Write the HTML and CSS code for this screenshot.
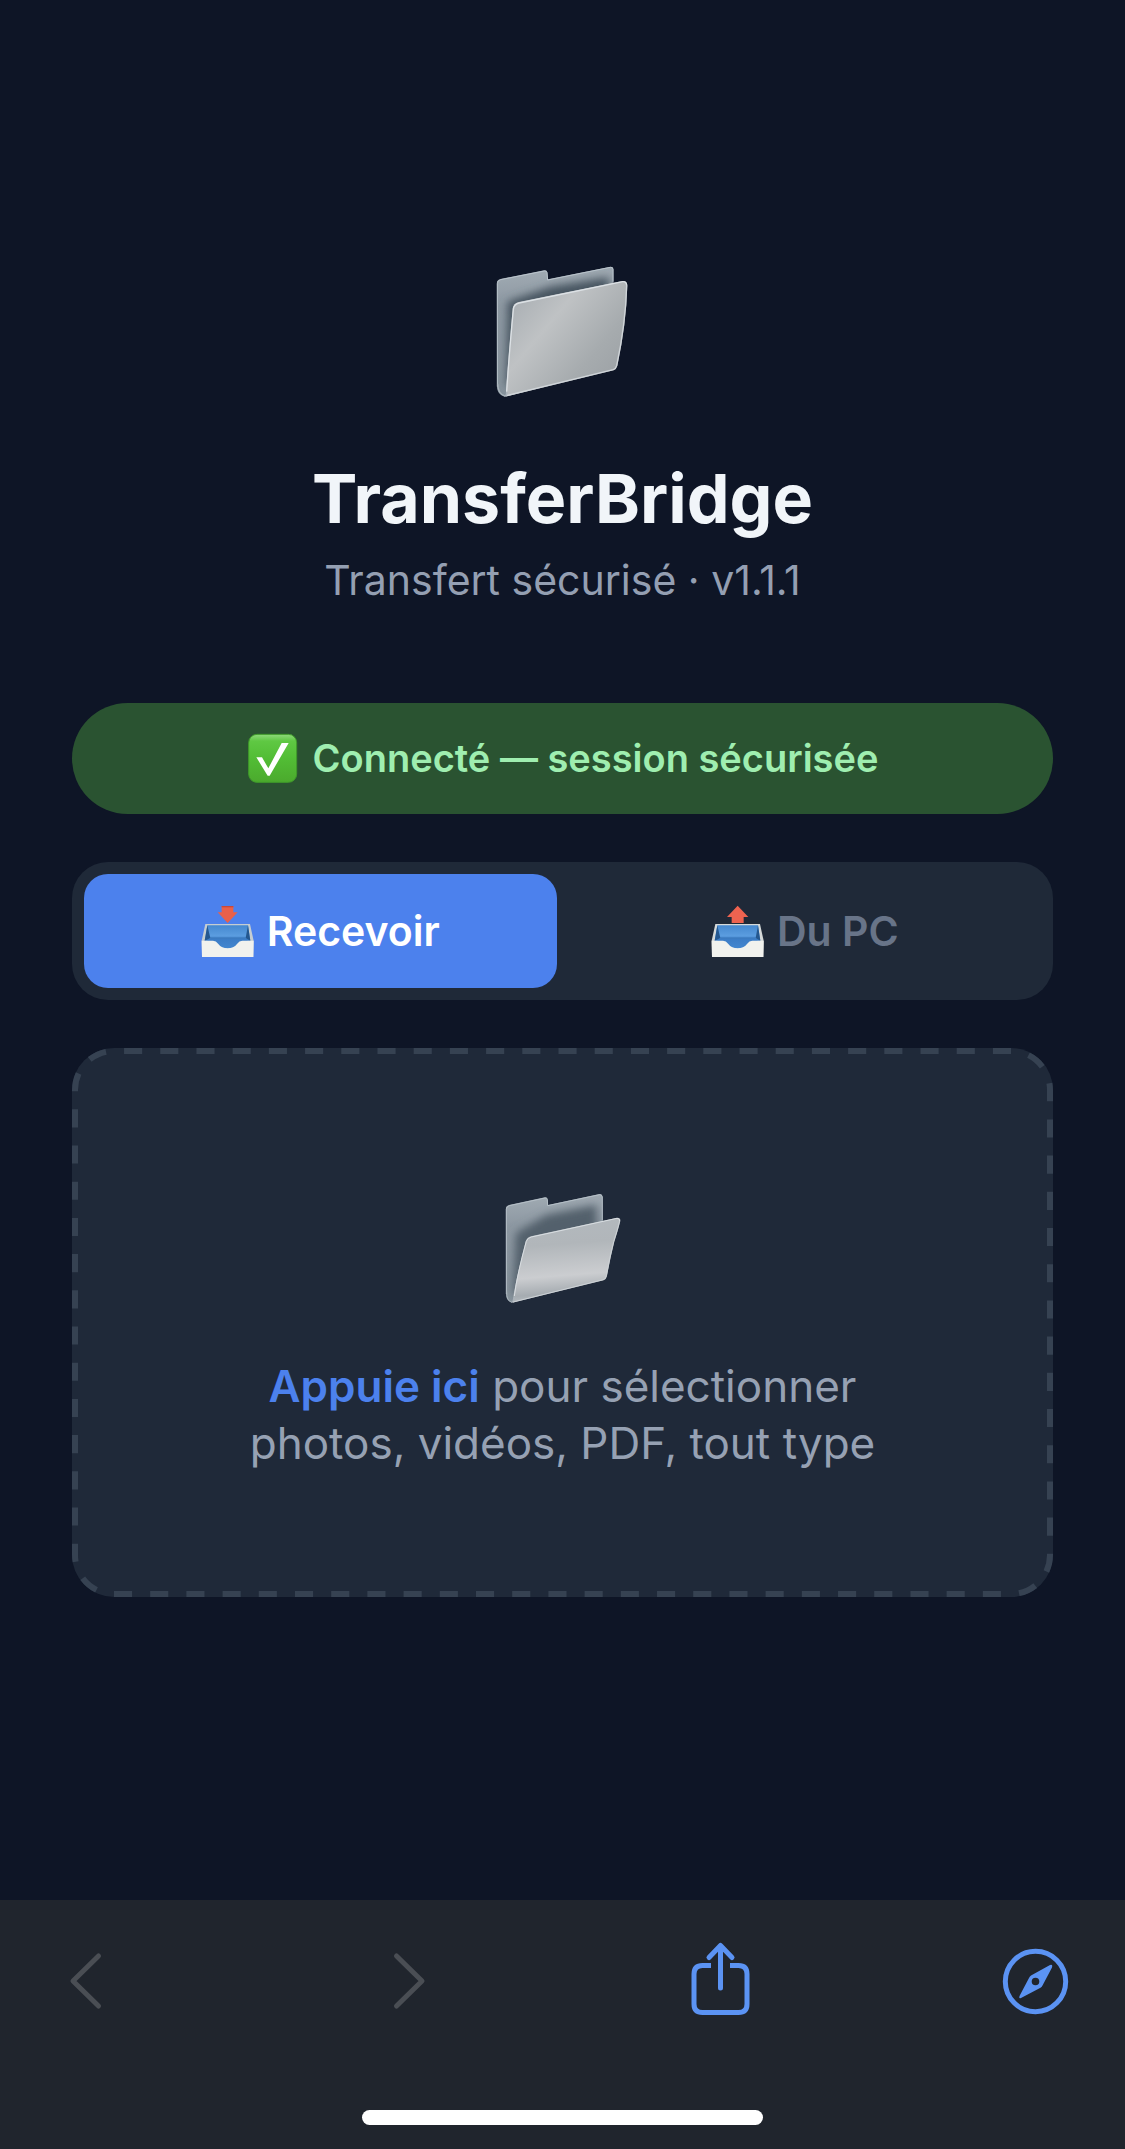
FILE: index.html
```html
<!DOCTYPE html>
<html lang="fr">

<head>
  <meta charset="UTF-8">
  <meta name="viewport" content="width=device-width, initial-scale=1.0">
  <title>TransferBridge</title>
  <link rel="stylesheet" href="styles.css">
</head>

<body>
  <main class="container">
    <header class="header">
      <svg class="logo" viewBox="77 75 402 402" aria-hidden="true">
        <defs>
          <linearGradient id="back" x1="0" y1="0" x2="0.05" y2="1">
            <stop offset="0" stop-color="#a4aeb6" />
            <stop offset="0.3" stop-color="#8d98a2" />
            <stop offset="1" stop-color="#87939c" />
          </linearGradient>
          <linearGradient id="front" x1="0" y1="0.1" x2="1" y2="0.9">
            <stop offset="0" stop-color="#a5abb0" />
            <stop offset="0.35" stop-color="#bfc2c4" />
            <stop offset="0.7" stop-color="#a6abae" />
            <stop offset="1" stop-color="#9a9fa3" />
          </linearGradient>
          <linearGradient id="frontLow" x1="0" y1="0" x2="0.1" y2="1">
            <stop offset="0" stop-color="#b3b9be" />
            <stop offset="0.35" stop-color="#b1b6ba" />
            <stop offset="0.72" stop-color="#cbcdd0" />
            <stop offset="0.92" stop-color="#a6acb1" />
            <stop offset="1" stop-color="#b4babf" />
          </linearGradient>
          <filter id="soft" x="-20%" y="-20%" width="140%" height="140%">
            <feGaussianBlur stdDeviation="13" />
          </filter>
          <clipPath id="logoBack">
            <path d="M79 131Q79 120 90 117L222 91Q230 90 231 97L233 118L420 80Q429 79 430 87L430 385L104 470Q80 464 80 440Z" />
          </clipPath>
          <clipPath id="folderBack">
            <path d="M78 118Q78 108 88 105L196 82Q203 81 204 88L205 105L360 72Q368 71 369 80L369 310L97 398Q79 393 79 372Z" />
          </clipPath>
        </defs>
        <g clip-path="url(#logoBack)">
          <rect x="75" y="75" width="402" height="402" fill="url(#back)" />
          <path d="M112 185L240 140L415 112V400L108 440Z" fill="#465560" filter="url(#soft)" />
        </g>
        <path d="M81 440V131Q81 121 91 119L222 93Q229 92 230 98L232 120L420 82Q427 81 428 88V125" fill="none" stroke="#b9c3cb" stroke-width="3" />
        <path d="M127 206Q129 190 145 186L456 123Q471 121 471 137Q468 250 441 378Q438 388 430 391L106 470Q112 380 127 206Z" fill="url(#front)" />
        <path d="M109 455Q114 370 129 208Q131 192 146 189L457 125Q469 124 469 137" fill="none" stroke="#dce1e5" stroke-width="4" />
        <path d="M469 137Q466 250 439 377Q436 387 429 389L108 467" fill="none" stroke="#d0d5d9" stroke-width="4" />
        <path d="M82 432Q83 462 103 468Q110 467 110 455" fill="none" stroke="#a9b3bb" stroke-width="4" />
      </svg>
      <h1 class="title">TransferBridge</h1>
      <p class="subtitle">Transfert sécurisé · v1.1.1</p>
    </header>

    <div class="status" role="status">
      <svg class="check" viewBox="549 129 153 153" aria-hidden="true">
        <defs>
          <linearGradient id="green" x1="0" y1="0" x2="0" y2="1">
            <stop offset="0" stop-color="#8fd97c" />
            <stop offset="0.14" stop-color="#5fc843" />
            <stop offset="0.5" stop-color="#52bd35" />
            <stop offset="1" stop-color="#4baa2d" />
          </linearGradient>
        </defs>
        <rect x="554" y="133" width="144" height="144" rx="25" fill="url(#green)" stroke="#3f9a2a" stroke-width="3" />
        <path d="M577 202H594L613 235L653 159H674L617 257H611Z" fill="#fff" />
      </svg>
      <span>Connecté — session sécurisée</span>
    </div>

    <div class="tabs">
      <button class="tab active" type="button">
        <svg class="tray" viewBox="420 645 162 159" aria-hidden="true">
          <defs>
            <linearGradient id="trayBlue" x1="0" y1="0" x2="0" y2="1">
              <stop offset="0" stop-color="#4588cf" />
              <stop offset="0.45" stop-color="#5b9de0" />
              <stop offset="0.6" stop-color="#3c7dc6" />
              <stop offset="1" stop-color="#4387d0" />
            </linearGradient>
          </defs>
          <path d="M482 648H517V667H530L500 699L470 667H482Z" fill="#e9604a" />
          <path d="M482 648H517V652H482Z" fill="#c9483a" />
          <path d="M433 702H567L578 752L577 801H423L422 752Z" fill="#c5cdd1" />
          <path d="M439 706H561L568 752Q540 752 530 766Q516 776 500 776Q482 776 470 766Q458 752 431 752Z" fill="url(#trayBlue)" />
          <path d="M439 706L448 744L431 752ZM561 706L554 744L568 752Z" fill="#24578f" />
          <path d="M448 744H554" stroke="#2f6aad" stroke-width="2" />
          <path d="M422 752H456Q465 752 472 762Q482 775 500 775Q518 775 528 762Q535 752 544 752H578L577 801H423Z" fill="#f1f2ee" />
        </svg>
        <span>Recevoir</span>
      </button>
      <button class="tab" type="button">
        <svg class="tray" viewBox="420 645 162 159" aria-hidden="true">
          <path d="M500 647L532 681H518V699H482V681H468Z" fill="#ee6350" />
          <path d="M433 702H567L578 752L577 801H423L422 752Z" fill="#d5d9d9" />
          <path d="M439 706H561L568 752Q540 752 530 766Q516 776 500 776Q482 776 470 766Q458 752 431 752Z" fill="url(#trayBlue)" />
          <path d="M439 706L448 744L431 752ZM561 706L554 744L568 752Z" fill="#24578f" />
          <path d="M448 744H554" stroke="#2f6aad" stroke-width="2" />
          <path d="M422 752H456Q465 752 472 762Q482 775 500 775Q518 775 528 762Q535 752 544 752H578L577 801H423Z" fill="#f1f2ee" />
        </svg>
        <span>Du PC</span>
      </button>
    </div>

    <label class="dropzone" for="files">
      <svg class="outline" aria-hidden="true">
        <rect class="dashes" x="3" y="3" rx="39" pathLength="2952" />
      </svg>
      <svg class="folder" viewBox="73 66 354 336" aria-hidden="true">
        <g clip-path="url(#folderBack)">
          <rect x="73" y="66" width="354" height="336" fill="url(#back)" />
          <path d="M108 190L200 135L350 105V320L100 375Z" fill="#52616c" filter="url(#soft)" />
        </g>
        <path d="M80 372V118Q80 110 89 107L196 84Q202 83 203 89L204 107L360 74Q367 74 368 81V152" fill="none" stroke="#b5bfc7" stroke-width="3" />
        <path d="M138 214Q142 202 154 199L412 143Q423 142 422 153Q416 178 404 215Q392 262 382 318Q380 328 372 331L98 398Q108 330 138 214Z" fill="url(#frontLow)" />
        <path d="M104 378Q112 315 140 214Q143 204 155 201L412 145Q421 145 420 153" fill="none" stroke="#d9dee2" stroke-width="3" />
        <path d="M420 153Q414 178 402 215Q390 262 380 317Q378 327 371 329L100 396" fill="none" stroke="#cdd2d6" stroke-width="3" />
        <path d="M81 365Q80 393 97 397Q103 393 104 380" fill="none" stroke="#a9b3bb" stroke-width="3" />
      </svg>
      <span class="hint"><strong>Appuie ici</strong> pour sélectionner<br>photos, vidéos, PDF, tout type</span>
      <input class="file-input" type="file" id="files" multiple>
    </label>
  </main>

  <footer class="browser-bar">
    <nav class="browser-actions">
      <button class="nav-btn" type="button" aria-label="Page précédente" disabled>
        <svg viewBox="0 0 80 80">
          <path d="M50.500 15L25 40L50.500 65" />
        </svg>
      </button>
      <button class="nav-btn" type="button" aria-label="Page suivante" disabled>
        <svg viewBox="0 0 80 80">
          <path d="M32.500 15L58 40L32.500 65" />
        </svg>
      </button>
      <button class="nav-btn" type="button" aria-label="Partager">
        <svg viewBox="0 0 80 80">
          <path d="M39.500 47V5M28 16.500L39.500 4.500L51 16.500" />
          <path d="M30 24.500H21.500Q13 24.500 13 33V63Q13 71.500 21.500 71.500H57.500Q66 71.500 66 63V33Q66 24.500 57.500 24.500H49" stroke-linecap="butt" />
        </svg>
      </button>
      <button class="nav-btn" type="button" aria-label="Ouvrir dans Safari">
        <svg viewBox="0 0 80 80">
          <circle cx="38.500" cy="40.500" r="30.200" />
          <path class="needle" fill-rule="evenodd" d="M53 24Q56 23 55 26.500L45.500 44.500Q45 46 43.500 46.800L24 57Q21.500 58 22.500 55L32 37Q32.500 35.500 34 34.500ZM38.500 36.700A3.800 3.800 0 1 0 38.500 44.300A3.800 3.800 0 1 0 38.500 36.700Z" />
        </svg>
      </button>
    </nav>
    <div class="home-indicator"></div>
  </footer>
</body>

</html>
```
FILE: styles.css
```css
* {
  box-sizing: border-box;
}

body {
  font-family: Inter, "Liberation Sans", sans-serif;
  margin: 0;
  min-height: 100vh;
  display: flex;
  flex-direction: column;
  background-color: #0e1526;
  color: #f1f5f9;
}

.container {
  flex: 1;
  padding: 265px 72px 72px;
  display: flex;
  flex-direction: column;
  gap: 48px;
}

.header {
  display: flex;
  flex-direction: column;
  align-items: center;
  text-align: center;
  margin-bottom: 50px;
}

.logo {
  width: 134px;
  height: 134px;
}

.title {
  margin: 57px 0 15px;
  font-size: 68px;
  line-height: 84px;
  font-weight: 700;
}

.subtitle {
  margin: 0;
  font-size: 41px;
  line-height: 50px;
  color: #949fb2;
}

.status {
  display: flex;
  justify-content: center;
  align-items: center;
  gap: 15px;
  padding: 30px;
  border-radius: 60px;
  background-color: #2a5331;
  color: #9feeb0;
  font-size: 38px;
  line-height: 51px;
  font-weight: 600;
}

.check {
  width: 51px;
  height: 51px;
}

.tabs {
  display: flex;
  gap: 12px;
  padding: 12px;
  border-radius: 36px;
  background-color: #1f2938;
}

.tab {
  flex: 1;
  display: flex;
  justify-content: center;
  align-items: center;
  gap: 12px;
  padding: 30px 12px;
  border: none;
  border-radius: 24px;
  background: none;
  color: #687488;
  font-family: inherit;
  font-size: 41px;
  line-height: 54px;
  font-weight: 600;
  cursor: pointer;
}

.tab.active {
  background-color: #4c81ed;
  color: white;
}

.tray {
  width: 54px;
  height: 53px;
}

.dropzone {
  position: relative;
  display: flex;
  flex-direction: column;
  align-items: center;
  gap: 54px;
  padding: 144px 48px 125px;
  border-radius: 42px;
  background-color: #1f2939;
  cursor: pointer;
}

/* dashes are longer than what border-style: dashed gives */
.outline {
  position: absolute;
  top: 0;
  left: 0;
  width: 100%;
  height: 100%;
}

.dashes {
  width: calc(100% - 6px);
  height: calc(100% - 6px);
  fill: none;
  stroke: #364252;
  stroke-width: 6px;
  stroke-dasharray: 18 18;
  stroke-dashoffset: -10;
}

.folder {
  width: 118px;
  height: 112px;
}

.hint {
  text-align: center;
  font-size: 44px;
  line-height: 57px;
  color: #96a1b3;
}

.hint strong {
  font-weight: 600;
  color: #4c81ed;
}

.file-input {
  position: absolute;
  width: 1px;
  height: 1px;
  opacity: 0;
}

.browser-bar {
  padding: 41px 48px 24px;
  background-color: #20252d;
}

.browser-actions {
  display: flex;
  justify-content: space-between;
}

.nav-btn {
  width: 80px;
  height: 80px;
  padding: 0;
  border: none;
  background: none;
  color: #5b93f3;
  cursor: pointer;
}

.nav-btn:disabled {
  color: #4a4e54;
  cursor: default;
}

.nav-btn svg {
  display: block;
  width: 80px;
  height: 80px;
  fill: none;
  stroke: currentColor;
  stroke-width: 5;
  stroke-linecap: round;
  stroke-linejoin: round;
}

.nav-btn .needle {
  fill: currentColor;
  stroke: none;
}

.home-indicator {
  width: 39%;
  height: 15px;
  margin: 89px auto 0;
  border-radius: 8px;
  background-color: white;
}
```
